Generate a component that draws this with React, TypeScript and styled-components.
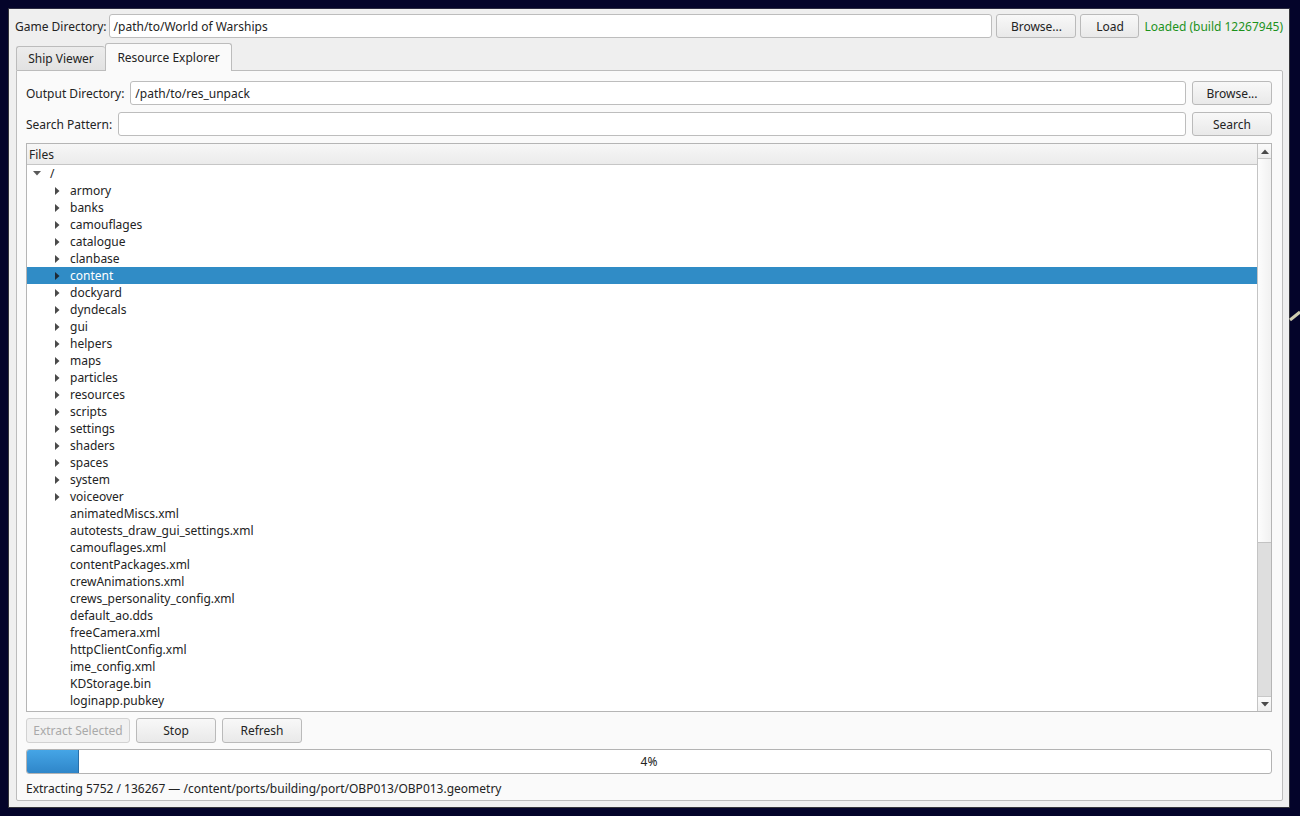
import React from "react";
import styled, { createGlobalStyle, css } from "styled-components";

const Global = createGlobalStyle`
  html, body { margin: 0; padding: 0; }
  body {
    background: #04042a;
    font-family: "Noto Sans", "DejaVu Sans", sans-serif;
    font-size: 12px;
    color: #232323;
    width: 1300px;
    height: 816px;
    overflow: hidden;
    position: relative;
  }
`;

const Desk = styled.div`
  padding: 8px 0 0 8px;
  height: 816px;
  box-sizing: border-box;
`;

const Deco = styled.svg`
  position: absolute;
  left: 1288px;
  top: 298px;
`;

const Win = styled.div`
  width: 1282px;
  height: 800px;
  box-sizing: border-box;
  background: #efefef;
  border: 1px solid #34343a;
  border-top-color: #2a2a40;
  padding: 5px 6px 6px 7px;
  display: flex;
  flex-direction: column;
`;

const Row = styled.div<{ $gap?: number; $h?: number }>`
  display: flex;
  align-items: center;
  gap: ${(p) => p.$gap ?? 6}px;
  height: ${(p) => p.$h ?? 24}px;
  flex: none;
`;

const TopRow = styled(Row)`
  margin-left: -1px;
`;

const Label = styled.span<{ $tight?: boolean }>`
  white-space: nowrap;
  color: #232323;
  ${(p) => p.$tight && css`margin-right: -2px;`}
`;

const Input = styled.div`
  flex: 1;
  height: 24px;
  box-sizing: border-box;
  background: #ffffff;
  border: 1px solid #bdbdbd;
  border-radius: 3px;
  padding: 0 4px;
  display: flex;
  align-items: center;
  white-space: nowrap;
  color: #232323;
`;

const Button = styled.div<{ $w: number; $disabled?: boolean; $h?: number }>`
  width: ${(p) => p.$w}px;
  height: ${(p) => p.$h ?? 24}px;
  box-sizing: border-box;
  flex: none;
  border: 1px solid #bababa;
  border-radius: 3px;
  background: linear-gradient(#f8f8f8, #e9e9e9);
  display: flex;
  align-items: center;
  justify-content: center;
  color: #232323;
  white-space: nowrap;
  ${(p) =>
    p.$disabled &&
    css`
      color: #a9a9a9;
      background: #f1f1f1;
      border-color: #d2d2d2;
    `}
`;

const Status = styled.span`
  color: #1c921c;
  white-space: nowrap;
  margin-left: 1px;
`;

const TabBar = styled.div`
  display: flex;
  align-items: flex-end;
  height: 27px;
  margin-top: 5px;
  flex: none;
  position: relative;
  z-index: 1;
`;

const Tab = styled.div<{ $active?: boolean; $w: number }>`
  width: ${(p) => p.$w}px;
  box-sizing: border-box;
  display: flex;
  align-items: center;
  justify-content: center;
  border: 1px solid #bcbcbc;
  border-bottom: none;
  border-radius: 3px 3px 0 0;
  ${(p) =>
    p.$active
      ? css`
          height: 28px;
          background: #fafafa;
          margin-bottom: -1px;
          padding-bottom: 1px;
        `
      : css`
          height: 24px;
          background: linear-gradient(#ececec, #e2e2e2);
          border-right: none;
        `}
`;

const Pane = styled.div`
  flex: 1;
  background: #fafafa;
  border: 1px solid #bcbcbc;
  border-radius: 0 2px 2px 2px;
  padding: 10px 10px 0 9px;
  display: flex;
  flex-direction: column;
  gap: 7px;
  min-height: 0;
`;

const Tree = styled.div`
  height: 569px;
  flex: none;
  box-sizing: border-box;
  border: 1px solid #b5b5b5;
  background: #ffffff;
  display: flex;
  overflow: hidden;
`;

const TreeMain = styled.div`
  flex: 1;
  display: flex;
  flex-direction: column;
  overflow: hidden;
`;

const Header = styled.div`
  height: 21px;
  flex: none;
  box-sizing: border-box;
  background: linear-gradient(#f7f7f7, #ebebeb);
  border-bottom: 1px solid #c6c6c6;
  padding-left: 2px;
  display: flex;
  align-items: center;
`;

const TreeRow = styled.div<{ $selected?: boolean; $depth: number }>`
  height: 17px;
  flex: none;
  display: flex;
  align-items: center;
  padding-left: ${(p) => 1 + p.$depth * 20}px;
  white-space: nowrap;
  color: ${(p) => (p.$selected ? "#ffffff" : "#232323")};
  background: ${(p) => (p.$selected ? "#308cc6" : "transparent")};
`;

const Arrow = styled.span`
  width: 18px;
  flex: none;
  display: flex;
  align-items: center;
  justify-content: center;
  margin-right: 4px;
`;

const Scroll = styled.div`
  width: 14px;
  flex: none;
  box-sizing: border-box;
  border-left: 1px solid #c4c4c4;
  background: #dedede;
  display: flex;
  flex-direction: column;
`;

const ScrollBtn = styled.div`
  height: 14px;
  flex: none;
  background: linear-gradient(#fbfbfb, #eeeeee);
  border-bottom: 1px solid #c8c8c8;
  display: flex;
  align-items: center;
  justify-content: center;
`;

const ScrollBtnDown = styled(ScrollBtn)`
  border-bottom: none;
  border-top: 1px solid #c8c8c8;
`;

const Thumb = styled.div`
  height: 383px;
  flex: none;
  background: linear-gradient(90deg, #fdfdfd, #f1f1f1);
  border-bottom: 1px solid #c2c2c2;
`;

const Track = styled.div`
  flex: 1;
`;

const Progress = styled.div`
  height: 25px;
  flex: none;
  box-sizing: border-box;
  border: 1px solid #b3b3b3;
  border-radius: 3px;
  background: #ffffff;
  position: relative;
  display: flex;
  align-items: center;
  justify-content: center;
  margin-top: -1px;
`;

const Chunk = styled.div`
  position: absolute;
  left: 0;
  top: 0;
  bottom: 0;
  background: linear-gradient(#45a5e6, #2f86c9);
  border-right: 1px solid #2a6fa8;
  border-radius: 2px 0 0 2px;
`;

const ProgressText = styled.span`
  position: relative;
  color: #232323;
`;

const StatusLine = styled.div`
  height: 16px;
  display: flex;
  align-items: center;
  margin-top: -1px;
  white-space: nowrap;
`;

const RightTri = ({ color }: { color: string }) => (
  <svg width="5" height="8" viewBox="0 0 5 8">
    <path d="M0 0 L4.5 4 L0 8 Z" fill={color} />
  </svg>
);
const DownTri = () => (
  <svg width="8" height="5" viewBox="0 0 8 5">
    <path d="M0 0 L8 0 L4 4.5 Z" fill="#5a5a5a" />
  </svg>
);

const dirs = [
  "armory", "banks", "camouflages", "catalogue", "clanbase", "content", "dockyard",
  "dyndecals", "gui", "helpers", "maps", "particles", "resources", "scripts",
  "settings", "shaders", "spaces", "system", "voiceover",
];
const files = [
  "animatedMiscs.xml", "autotests_draw_gui_settings.xml", "camouflages.xml",
  "contentPackages.xml", "crewAnimations.xml", "crews_personality_config.xml",
  "default_ao.dds", "freeCamera.xml", "httpClientConfig.xml", "ime_config.xml",
  "KDStorage.bin", "loginapp.pubkey",
];

export default function App() {
  const progress = 5752 / 136267;
  return (
    <>
      <Global />
      <Deco width="12" height="30" viewBox="0 0 12 30">
        <path d="M2 22 L12 14" stroke="#cfcdb0" strokeWidth="3" />
      </Deco>
      <Desk>
        <Win>
          <TopRow $gap={4}>
            <Label $tight>Game Directory:</Label>
            <Input>/path/to/World of Warships</Input>
            <Button $w={80}>Browse...</Button>
            <Button $w={59}>Load</Button>
            <Status>Loaded (build 12267945)</Status>
          </TopRow>
          <TabBar>
            <Tab $w={89}>Ship Viewer</Tab>
            <Tab $w={127} $active>Resource Explorer</Tab>
          </TabBar>
          <Pane>
            <Row>
              <Label>Output Directory:</Label>
              <Input>/path/to/res_unpack</Input>
              <Button $w={80}>Browse...</Button>
            </Row>
            <Row>
              <Label>Search Pattern:</Label>
              <Input />
              <Button $w={80}>Search</Button>
            </Row>
            <Tree>
              <TreeMain>
                <Header>Files</Header>
                <TreeRow $depth={0}>
                  <Arrow><DownTri /></Arrow>/
                </TreeRow>
                {dirs.map((d) => (
                  <TreeRow key={d} $depth={1} $selected={d === "content"}>
                    <Arrow><RightTri color={d === "content" ? "#1e2a36" : "#4a4a4a"} /></Arrow>
                    {d}
                  </TreeRow>
                ))}
                {files.map((f) => (
                  <TreeRow key={f} $depth={1}>
                    <Arrow />
                    {f}
                  </TreeRow>
                ))}
              </TreeMain>
              <Scroll>
                <ScrollBtn>
                  <svg width="8" height="5" viewBox="0 0 8 5"><path d="M0 5 L8 5 L4 0.5 Z" fill="#4a4a4a" /></svg>
                </ScrollBtn>
                <Thumb />
                <Track />
                <ScrollBtnDown>
                  <svg width="8" height="5" viewBox="0 0 8 5"><path d="M0 0 L8 0 L4 4.5 Z" fill="#4a4a4a" /></svg>
                </ScrollBtnDown>
              </Scroll>
            </Tree>
            <Row $h={25} style={{ marginTop: -1 }}>
              <Button $w={104} $h={25} $disabled>Extract Selected</Button>
              <Button $w={80} $h={25}>Stop</Button>
              <Button $w={80} $h={25}>Refresh</Button>
            </Row>
            <Progress>
              <Chunk style={{ width: `${Math.round(progress * 1200)}px` }} />
              <ProgressText>4%</ProgressText>
            </Progress>
            <StatusLine>Extracting 5752 / 136267 — /content/ports/building/port/OBP013/OBP013.geometry</StatusLine>
          </Pane>
        </Win>
      </Desk>
    </>
  );
}
